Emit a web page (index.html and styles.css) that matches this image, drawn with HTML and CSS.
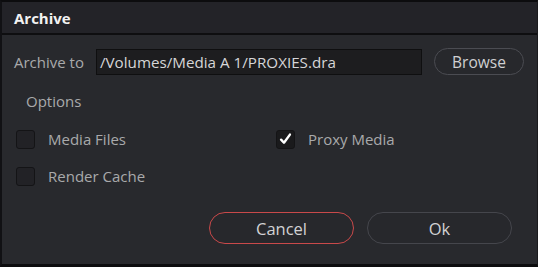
FILE: index.html
```html
<!DOCTYPE html>
<html>
<head>
<meta charset="utf-8">
<link rel="stylesheet" href="styles.css">
</head>
<body>
<div class="dialog">
  <div class="titlebar">Archive</div>
  <div class="content">
    <div class="row-path">
      <span class="label">Archive to</span>
      <div class="path-field">/Volumes/Media A 1/PROXIES.dra</div>
      <button class="btn browse">Browse</button>
    </div>
    <div class="options-title">Options</div>
    <div class="options-grid">
      <label class="opt"><span class="box"></span><span class="opt-text">Media Files</span></label>
      <label class="opt"><span class="box checked"><svg viewBox="0 0 20 20" width="18" height="18"><path d="M4.8 10.8 L8.2 14.4 L15.2 4.8" fill="none" stroke="#fff" stroke-width="2.8" stroke-linecap="round" stroke-linejoin="round"/></svg></span><span class="opt-text">Proxy Media</span></label>
      <label class="opt"><span class="box"></span><span class="opt-text">Render Cache</span></label>
    </div>
    <div class="actions">
      <button class="btn action cancel">Cancel</button>
      <button class="btn action ok">Ok</button>
    </div>
  </div>
</div>
</body>
</html>
```
FILE: styles.css
```css
* { box-sizing: border-box; }
html, body { margin: 0; padding: 0; background: #0d0d0f; }
body { width: 538px; height: 267px; overflow: hidden; font-family: "Open Sans", "Noto Sans", sans-serif; }
.dialog {
  width: 538px;
  height: 267px;
  border-top: 2px solid #0c0c0e;
  border-left: 2px solid #111114;
  border-bottom: 3px solid #0c0c0e;
  border-right: 1px solid #1a1a1d;
  background: #28292d;
  display: flex;
  flex-direction: column;
}
.titlebar {
  height: 33px;
  background: #232328;
  color: #f2f2f2;
  font-weight: 700;
  font-size: 15px;
  line-height: 33px;
  padding-left: 12px;
  border-bottom: 2px solid #0e0e10;
  flex: none;
}
.content {
  flex: 1;
  padding: 13px 0 0 0;
  display: flex;
  flex-direction: column;
}
.row-path {
  display: flex;
  align-items: center;
  height: 27px;
  padding-left: 12px;
}
.label {
  width: 82px;
  color: #a9a9ab;
  font-size: 15px;
}
.path-field {
  width: 326px;
  height: 26px;
  background: #1d1d1f;
  border: 1px solid #0f0f10;
  color: #d6d6d8;
  font-size: 15.2px;
  line-height: 24px;
  padding-left: 3px;
  white-space: nowrap;
  overflow: hidden;
}
.btn {
  font-family: "Open Sans", "Noto Sans", sans-serif;
  background: #27282c;
  border: 1px solid #4b4c52;
  color: #d0d0d2;
  border-radius: 14px;
  padding: 0;
}
.browse {
  margin-left: 12px;
  width: 90px;
  height: 27px;
  font-size: 15.5px;
}
.options-title {
  margin-top: 16px;
  padding-left: 24px;
  color: #a9a9ab;
  font-size: 15px;
  height: 20px;
  line-height: 20px;
}
.options-grid {
  margin-top: 18px;
  padding-left: 14px;
  display: grid;
  grid-template-columns: 260px 200px;
  row-gap: 17px;
}
.opt {
  display: flex;
  align-items: center;
  height: 20px;
}
.box {
  width: 19px;
  height: 19px;
  background: #222226;
  border: 1px solid #141416;
  border-radius: 3px;
  display: flex;
  align-items: center;
  justify-content: center;
}
.box.checked { background: #1a1a1c; }
.opt-text {
  margin-left: 13px;
  color: #a9a9ab;
  font-size: 15px;
}
.actions {
  margin-top: 26px;
  display: flex;
  justify-content: flex-end;
  gap: 13px;
  padding-right: 25px;
}
.action {
  width: 145px;
  height: 32px;
  border-radius: 16px;
  font-size: 16.5px;
  color: #d2d2d4;
}
.cancel { border: 1.5px solid #c9494a; }
.ok { border: 1px solid #45464c; }
```
